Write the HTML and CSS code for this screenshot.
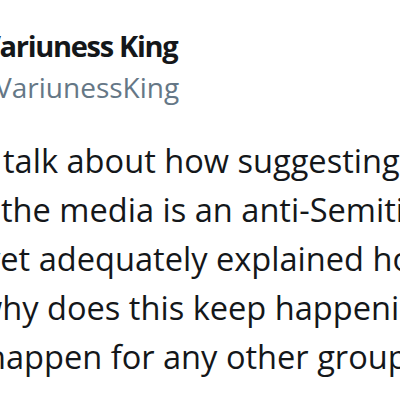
FILE: index.html
```html
<!DOCTYPE html>
<html>
<head>
<meta charset="utf-8">
<link rel="stylesheet" href="styles.css">
</head>
<body>
<div class="tweet">
  <div class="header">
    <div class="name"><span class="cut cut-name">V</span>ariuness King</div>
    <div class="handle"><span class="cut cut-handle">@V</span>ariunessKing</div>
  </div>
  <div class="text">
    <div class="line l1">talk about how suggesting Jews</div>
    <div class="line l2">the media is an anti-Semitic trope</div>
    <div class="line l3"><span class="cut cut-y">y</span>et adequately explained how</div>
    <div class="line l4"><span class="cut cut-w">w</span>hy does this keep happening</div>
    <div class="line l5"><span class="cut cut-h">h</span>appen for any other group?</div>
  </div>
</div>
</body>
</html>
```

FILE: styles.css
```css
html, body {
  margin: 0;
  padding: 0;
  background: #ffffff;
  overflow: hidden;
  width: 400px;
  height: 400px;
}
.tweet {
  font-family: "Open Sans", "Noto Sans", sans-serif;
  color: #14171a;
  white-space: nowrap;
}
.header {
  padding-top: 26px;
}
.name {
  font-size: 29px;
  font-weight: 700;
  line-height: 40px;
  letter-spacing: -1.3px;
}
.handle {
  margin-top: 1px;
  font-size: 28px;
  line-height: 40px;
  color: #657786;
}
.text {
  margin-top: 29px;
  font-size: 32.6px;
  line-height: 49px;
}
.line {
  white-space: nowrap;
}
.l1 {
  padding-left: 3px;
}
.l2 {
  padding-left: 1px;
}
.cut {
  display: inline-block;
}
.cut-name {
  margin-left: -18px;
}
.cut-handle {
  margin-left: -30px;
}
.cut-y {
  margin-left: -16px;
}
.cut-w {
  margin-left: -23px;
}
.cut-h {
  margin-left: -14px;
}
```
